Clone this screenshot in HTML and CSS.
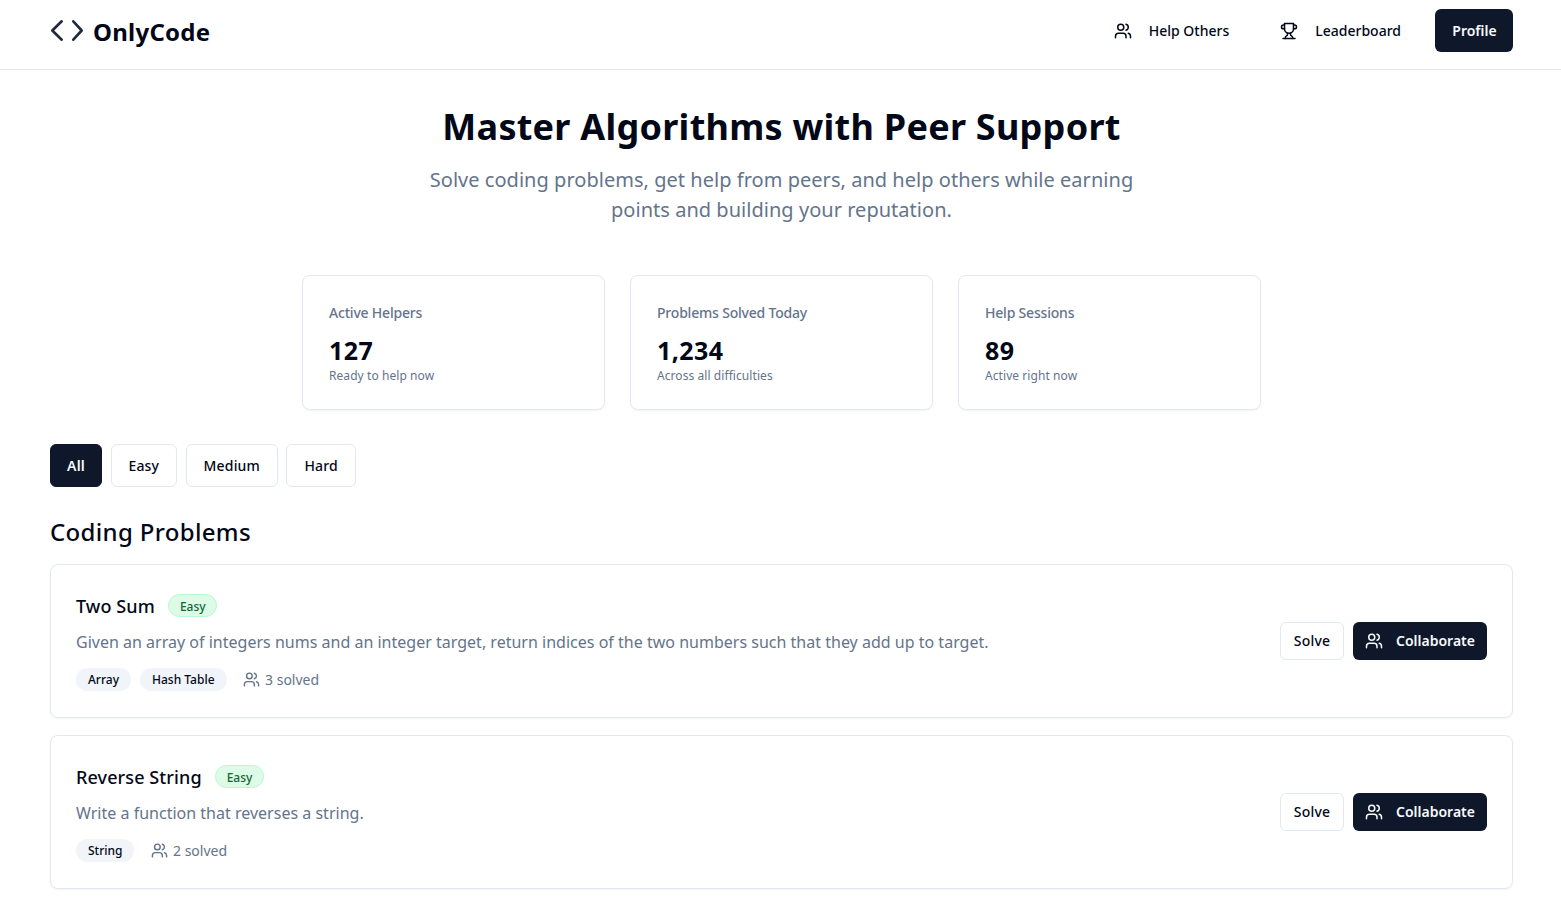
FILE: index.html
```html
<!DOCTYPE html>
<html lang="en">
<head>
    <meta charset="UTF-8">
    <meta name="viewport" content="width=device-width, initial-scale=1.0">
    <title>OnlyCode</title>
    <link rel="stylesheet" href="styles.css">
</head>
<body>
    <svg class="icon-defs" width="0" height="0">
        <symbol id="users" viewBox="0 0 24 24">
            <path d="M16 21v-2a4 4 0 0 0-4-4H6a4 4 0 0 0-4 4v2"/>
            <circle cx="9" cy="7" r="4"/>
            <path d="M22 21v-2a4 4 0 0 0-3-3.87"/>
            <path d="M16 3.13a4 4 0 0 1 0 7.75"/>
        </symbol>
        <symbol id="trophy" viewBox="0 0 24 24">
            <path d="M6 9H4.5a2.5 2.5 0 0 1 0-5H6"/>
            <path d="M18 9h1.5a2.5 2.5 0 0 0 0-5H18"/>
            <path d="M4 22h16"/>
            <path d="M10 14.66V17c0 .55-.47.98-.97 1.21C7.85 18.75 7 20.24 7 22"/>
            <path d="M14 14.66V17c0 .55.47.98.97 1.21C16.15 18.75 17 20.24 17 22"/>
            <path d="M18 2H6v7a6 6 0 0 0 12 0V2Z"/>
        </symbol>
    </svg>

    <header class="site-header">
        <a class="logo" href="#">
            <svg class="logo-icon" viewBox="0 0 34 24">
                <path d="M11.7 2.3 2.3 11.5l9.4 9.2"/>
                <path d="M23.3 2.3l8.4 9.2-8.4 9.2"/>
            </svg>
            <span>OnlyCode</span>
        </a>
        <nav class="nav">
            <a class="nav-link" href="#"><svg class="icon"><use href="#users"/></svg>Help Others</a>
            <a class="nav-link" href="#"><svg class="icon"><use href="#trophy"/></svg>Leaderboard</a>
            <a class="btn btn-dark btn-profile" href="#">Profile</a>
        </nav>
    </header>

    <main class="page">
        <section class="hero">
            <h1>Master Algorithms with Peer Support</h1>
            <p>Solve coding problems, get help from peers, and help others while earning points and building your reputation.</p>
        </section>

        <section class="stats">
            <div class="stat-card">
                <div class="stat-label">Active Helpers</div>
                <div class="stat-value">127</div>
                <div class="stat-note">Ready to help now</div>
            </div>
            <div class="stat-card">
                <div class="stat-label">Problems Solved Today</div>
                <div class="stat-value">1,234</div>
                <div class="stat-note">Across all difficulties</div>
            </div>
            <div class="stat-card">
                <div class="stat-label">Help Sessions</div>
                <div class="stat-value">89</div>
                <div class="stat-note">Active right now</div>
            </div>
        </section>

        <div class="filters">
            <button class="filter filter-active">All</button>
            <button class="filter">Easy</button>
            <button class="filter">Medium</button>
            <button class="filter">Hard</button>
        </div>

        <h2 class="section-title">Coding Problems</h2>

        <article class="problem">
            <div class="problem-body">
                <div class="problem-head">
                    <h3>Two Sum</h3>
                    <span class="badge-easy">Easy</span>
                </div>
                <p class="problem-desc">Given an array of integers nums and an integer target, return indices of the two numbers such that they add up to target.</p>
                <div class="problem-meta">
                    <span class="tag">Array</span>
                    <span class="tag">Hash Table</span>
                    <span class="solved"><svg class="icon icon-small"><use href="#users"/></svg>3 solved</span>
                </div>
            </div>
            <div class="problem-actions">
                <button class="btn btn-light">Solve</button>
                <button class="btn btn-dark btn-collab"><svg class="icon"><use href="#users"/></svg>Collaborate</button>
            </div>
        </article>

        <article class="problem">
            <div class="problem-body">
                <div class="problem-head">
                    <h3>Reverse String</h3>
                    <span class="badge-easy">Easy</span>
                </div>
                <p class="problem-desc">Write a function that reverses a string.</p>
                <div class="problem-meta">
                    <span class="tag">String</span>
                    <span class="solved"><svg class="icon icon-small"><use href="#users"/></svg>2 solved</span>
                </div>
            </div>
            <div class="problem-actions">
                <button class="btn btn-light">Solve</button>
                <button class="btn btn-dark btn-collab"><svg class="icon"><use href="#users"/></svg>Collaborate</button>
            </div>
        </article>
    </main>
</body>
</html>
```

FILE: styles.css
```css
* {
    box-sizing: border-box;
}

body {
    margin: 0;
    font-family: "Noto Sans", sans-serif;
    color: #020817;
    background-color: #fff;
}

a {
    color: inherit;
    text-decoration: none;
}

button {
    font-family: inherit;
    cursor: pointer;
}

.icon-defs {
    position: absolute;
}

.icon {
    width: 18px;
    height: 18px;
    fill: none;
    stroke: currentColor;
    stroke-width: 2;
    stroke-linecap: round;
    stroke-linejoin: round;
    flex-shrink: 0;
}

.icon-small {
    width: 17px;
    height: 17px;
}

/* header */
.site-header {
    height: 70px;
    padding: 0 48px 8px 50px;
    display: flex;
    align-items: center;
    justify-content: space-between;
    border-bottom: 1px solid #e2e8f0;
}

.logo {
    display: flex;
    align-items: center;
    gap: 9px;
    margin-top: 2px;
    font-size: 24px;
    font-weight: 700;
    letter-spacing: 0.25px;
}

.logo-icon {
    width: 34px;
    height: 24px;
    margin-top: -2px;
    fill: none;
    stroke: #1e293b;
    stroke-width: 2.6;
    stroke-linecap: round;
    stroke-linejoin: round;
}

.nav {
    display: flex;
    align-items: center;
    gap: 17px;
    font-size: 14px;
    font-weight: 500;
}

.nav-link {
    display: flex;
    align-items: center;
    gap: 17px;
    padding: 0 17px;
    height: 43px;
}

/* buttons */
.btn {
    display: inline-flex;
    align-items: center;
    justify-content: center;
    padding-bottom: 2px;
    border-radius: 6px;
    font-size: 14px;
    font-weight: 600;
}

.btn-dark {
    background-color: #0f172a;
    color: #f8fafc;
    border: none;
}

.btn-light {
    width: 64px;
    height: 38px;
    background-color: #fff;
    color: #020817;
    border: 1px solid #e2e8f0;
    font-weight: 500;
    letter-spacing: 0.2px;
}

.btn-profile {
    width: 78px;
    height: 43px;
    padding: 0 0 0 1px;
}

.btn-collab {
    width: 134px;
    height: 38px;
    gap: 13px;
}

/* hero */
.page {
    padding: 0 48px 0 50px;
}

.hero {
    text-align: center;
    padding-top: 32px;
}

.hero h1 {
    margin: 0;
    font-size: 36px;
    line-height: 50px;
    font-weight: 700;
    letter-spacing: 0.26px;
}

.hero p {
    width: 720px;
    margin: 13px auto 0;
    font-size: 20px;
    line-height: 30px;
    color: #64748b;
    letter-spacing: 0.03px;
}

/* stats */
.stats {
    width: 959px;
    margin: 50px auto 0;
    display: grid;
    grid-template-columns: repeat(3, 1fr);
    gap: 25px;
}

.stat-card {
    height: 135px;
    padding: 27px 26px 0;
    border: 1px solid #e2e8f0;
    border-radius: 8px;
    box-shadow: 0 1px 2px rgba(0, 0, 0, 0.05);
}

.stat-label {
    font-size: 14px;
    line-height: 20px;
    font-weight: 500;
    color: #64748b;
    letter-spacing: -0.2px;
}

.stat-value {
    margin-top: 11px;
    font-size: 25px;
    line-height: 32px;
    font-weight: 700;
    letter-spacing: 0.4px;
}

.stat-note {
    margin-top: 2px;
    font-size: 12px;
    line-height: 16px;
    color: #64748b;
    letter-spacing: 0.07px;
}

/* filters */
.filters {
    margin-top: 34px;
    display: flex;
    gap: 8.5px;
}

.filter {
    height: 43px;
    padding: 0 17px 1px;
    background-color: #fff;
    color: #020817;
    border: 1px solid #e2e8f0;
    border-radius: 6px;
    font-size: 14px;
    font-weight: 500;
    letter-spacing: 0.15px;
}

.filter-active {
    width: 52px;
    padding: 0 0 1px;
    background-color: #0f172a;
    border-color: #0f172a;
    color: #f8fafc;
    font-weight: 600;
}

.section-title {
    margin: 27px 0 14px;
    font-size: 24px;
    line-height: 36px;
    font-weight: 500;
    letter-spacing: 0.33px;
}

/* problem cards */
.problem {
    height: 154px;
    margin-bottom: 17px;
    padding: 0 25px;
    display: flex;
    align-items: center;
    justify-content: space-between;
    border: 1px solid #e2e8f0;
    border-radius: 8px;
    box-shadow: 0 1px 2px rgba(0, 0, 0, 0.05);
}

.problem-body {
    display: flex;
    flex-direction: column;
}

.problem-head {
    display: flex;
    align-items: center;
    gap: 13.5px;
}

.problem-head h3 {
    margin: 0;
    font-size: 18px;
    line-height: 28px;
    font-weight: 500;
    letter-spacing: 0.1px;
}

.badge-easy {
    height: 23px;
    padding: 1px 10.5px 0;
    display: flex;
    align-items: center;
    border: 1px solid #bbf7d0;
    border-radius: 12px;
    background-color: #dcfce7;
    color: #166534;
    font-size: 12px;
    font-weight: 500;
}

.problem-desc {
    margin: 10px 0 0;
    font-size: 16px;
    line-height: 24px;
    color: #64748b;
    letter-spacing: 0.01px;
}

.problem-meta {
    margin-top: 14px;
    display: flex;
    align-items: center;
    gap: 9px;
}

.tag {
    height: 23px;
    padding: 1px 12px 0;
    display: flex;
    align-items: center;
    border-radius: 12px;
    background-color: #f1f5f9;
    font-size: 12px;
    font-weight: 500;
}

.solved {
    margin-left: 7.5px;
    display: flex;
    align-items: center;
    gap: 5px;
    font-size: 14px;
    color: #64748b;
}

.problem-actions {
    display: flex;
    gap: 9px;
}
```
